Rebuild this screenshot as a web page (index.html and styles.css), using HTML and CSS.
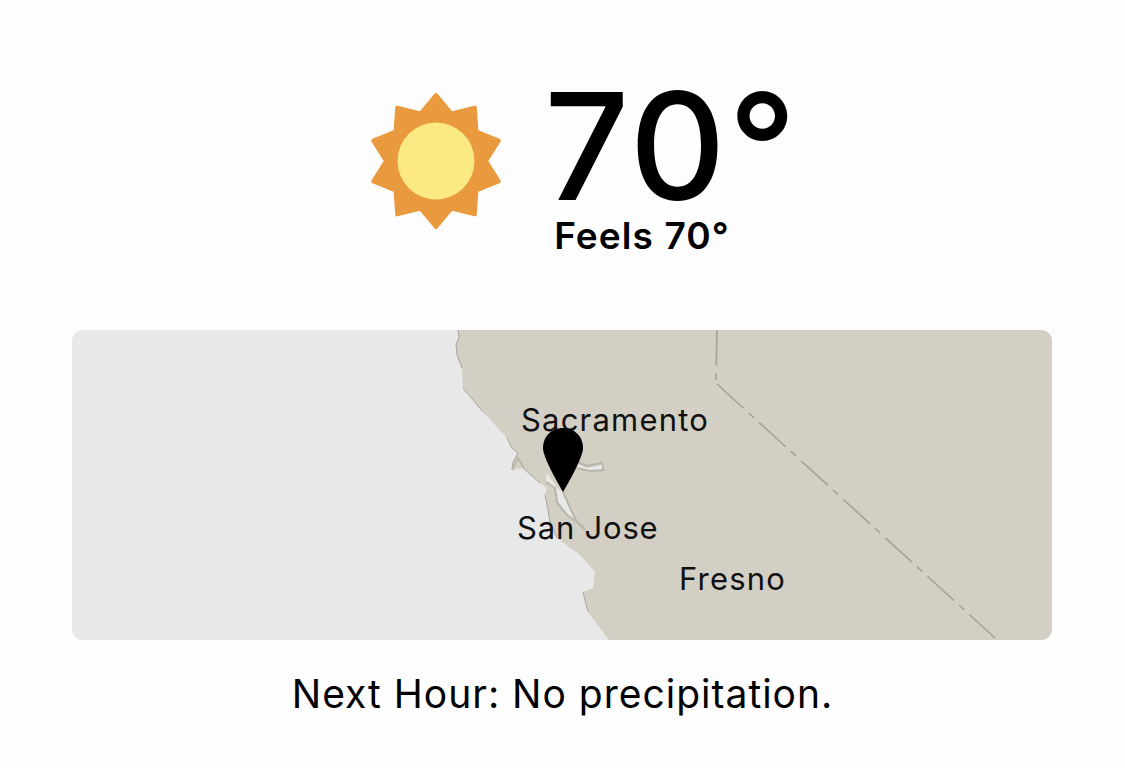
FILE: index.html
```html
<!DOCTYPE html>
<html lang="en">
<head>
<meta charset="utf-8">
<title>Weather</title>
<link rel="stylesheet" href="styles.css">
</head>
<body>
<main class="page">
  <section class="hero">
    <svg class="sun" viewBox="-70 -70 140 140" aria-hidden="true">
      <polygon class="sun-rays" points="0,-66 15.45,-47.55 38.79,-53.4 40.45,-29.39 62.77,-20.4 50,0 62.77,20.4 40.45,29.39 38.79,53.4 15.45,47.55 0,66 -15.45,47.55 -38.79,53.4 -40.45,29.39 -62.77,20.4 -50,0 -62.77,-20.4 -40.45,-29.39 -38.79,-53.4 -15.45,-47.55"/>
      <circle class="sun-core" r="38.5"/>
    </svg>
    <div class="reading">
      <div class="temp">70°</div>
      <div class="feels">Feels 70°</div>
    </div>
  </section>
  <section class="map">
    <svg class="map-art" viewBox="0 0 980 310" preserveAspectRatio="none" aria-hidden="true">
      <path class="land" d="M386 0 L387 8 L384 14 L385 25 L390 38 L391 58 L411 82 L425 97 L435 108 L440 118 L446 123 L441 132 L440 140 L451 138 L468 153 L475 158 L473 165 L476 180 L478 192 L485 208 L508 225 L523 242 L521 258 L511 262 L516 282 L537 310 L980 310 L980 0 Z"/>
      <path class="shore" d="M386 0 L387 8 L384 14 L385 25 L390 38 M391 58 L411 82 M435 108 L440 118 L446 123 L441 132 L440 140 M451 138 L468 153 M473 165 L476 180 L478 192 L485 208 M511 262 L516 282"/>
      <path class="bay" d="M475 143 L485 158 L491 162 L500 182 L505 192 L495 185 L485 172 L483 158 L474 152 Z"/>
      <path class="bay-edge" d="M474 152 L483 158 L485 172 L495 185 L505 192 L513 200 M491 162 L500 182 L505 192 L512 198"/>
      <path class="bay-edge" d="M505 132 L515 136 L530 133 L531 140 L518 141 L505 138"/>
      <path class="bay" d="M505 134 L515 138 L530 135 L530 139 L518 140 L505 137 Z"/>
      <path class="bay-edge" d="M440 140 L446 128 L452 138"/>
      <path class="border" d="M645 0 L644 52"/>
      <path class="border" d="M645 54 L923 308"/>
    </svg>
    <span class="city city-sacramento">Sacramento</span>
    <span class="city city-sanjose">San Jose</span>
    <span class="city city-fresno">Fresno</span>
    <svg class="pin" viewBox="0 0 40 64" aria-hidden="true">
      <path d="M20 0 C31.5 0 40 8.5 40 20 C40 29 27 52 20 64 C13 52 0 29 0 20 C0 8.5 8.5 0 20 0 Z"/>
    </svg>
  </section>
  <p class="next-hour">Next Hour: No precipitation.</p>
</main>
</body>
</html>
```
FILE: styles.css
```css
* { box-sizing: border-box; }
html, body { margin: 0; height: 100%; }
body {
  background: #fdfdfd;
  color: #000;
  font-family: Inter, "Liberation Sans", sans-serif;
  overflow: hidden;
}
.page {
  display: flex;
  flex-direction: column;
  align-items: center;
  padding-top: 66px;
}
.hero {
  display: flex;
  align-items: flex-start;
  gap: 38px;
  height: 264px;
  margin-left: 40px;
}
.sun {
  width: 140px;
  height: 140px;
  margin-top: 25px;
}
.sun-rays {
  fill: #ea9a3e;
  stroke: #ea9a3e;
  stroke-width: 4;
  stroke-linejoin: round;
}
.sun-core { fill: #fbe983; }
.reading {
  display: flex;
  flex-direction: column;
  padding-top: 11px;
}
.temp {
  font-size: 149px;
  font-weight: 500;
  letter-spacing: 2.5px;
  line-height: 139px;
}
.feels {
  font-size: 37px;
  font-weight: 600;
  line-height: 40px;
  letter-spacing: 1.1px;
  margin-left: 10px;
}
.map {
  position: relative;
  width: 980px;
  height: 310px;
  margin-right: 1px;
  border-radius: 11px;
  overflow: hidden;
  background: #e8e8e8;
}
.map-art {
  display: block;
  width: 100%;
  height: 100%;
  filter: blur(0.6px);
}
.land { fill: #d3cfc4; }
.shore { fill: none; stroke: #a8a59b; stroke-width: 1; }
.bay { fill: #e8e8e6; }
.bay-edge { fill: none; stroke: #b8b5ab; stroke-width: 2; }
.border {
  fill: none;
  stroke: #a5a298;
  stroke-width: 1.6;
  stroke-dasharray: 36 7 7 7;
}
.city {
  position: absolute;
  font-size: 31px;
  letter-spacing: 1.2px;
  line-height: 36px;
  color: #111;
  white-space: nowrap;
}
.city-sacramento { left: 449px; top: 72px; }
.city-sanjose { left: 445px; top: 180px; letter-spacing: 0.8px; }
.city-fresno { left: 607px; top: 231px; }
.pin {
  position: absolute;
  left: 471px;
  top: 98px;
  width: 40px;
  height: 64px;
  fill: #000;
}
.next-hour {
  margin: 31px 0 0;
  font-size: 39px;
  letter-spacing: 1px;
  line-height: 46px;
}
```
